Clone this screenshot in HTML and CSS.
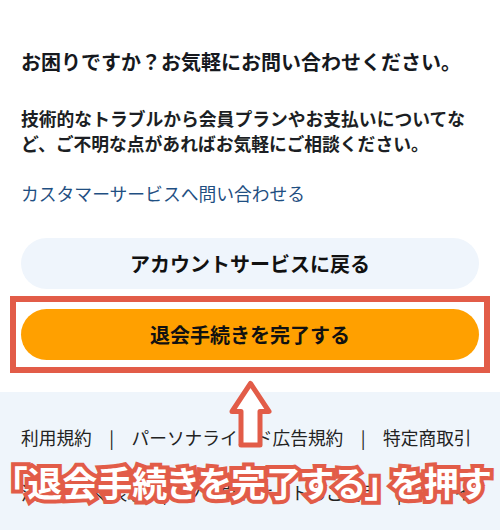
FILE: index.html
```html
<!DOCTYPE html>
<html lang="ja">
<head>
<meta charset="utf-8">
<link rel="stylesheet" href="styles.css">
</head>
<body>
<main class="content">
  <h1 class="title">お困りですか？お気軽にお問い合わせください。</h1>
  <p class="desc">技術的なトラブルから会員プランやお支払いについてなど、ご不明な点があればお気軽にご相談ください。</p>
  <a class="link" href="#">カスタマーサービスへ問い合わせる</a>
  <div class="actions">
    <button class="btn btn-back">アカウントサービスに戻る</button>
    <div class="highlight">
      <button class="btn btn-primary">退会手続きを完了する</button>
      <span class="highlight-box"></span>
    </div>
  </div>
</main>
<footer class="footer">
  <a href="#">利用規約</a><span class="sep">|</span><a href="#">パーソナライズド広告規約</a><span class="sep">|</span><a href="#">特定商取引法に基づく表示</a><span class="sep">|</span><a href="#">クラウドサイトのご利用</a><span class="sep">|</span><a href="#">プライ</a>
</footer>
<div class="annotation">
  <svg class="arrow" width="50" height="74" viewBox="0 0 50 74">
    <path d="M24.5 5.5 L43 33.5 L34 33.5 L34 67 L15 67 L15 33.5 L6 33.5 Z" fill="#fff" stroke="#e25c48" stroke-width="5" stroke-linejoin="round"/>
  </svg>
  <p class="note">「退会手続きを完了する」 を押す</p>
</div>
</body>
</html>
```
FILE: styles.css
```css
* { box-sizing: border-box; }
html, body { margin: 0; padding: 0; }
body {
  width: 500px;
  height: 530px;
  overflow: hidden;
  position: relative;
  background: #fff;
  font-family: "Noto Sans CJK JP", "Noto Sans", sans-serif;
  color: #16191e;
}
.content {
  padding: 48px 21px 32px;
}
.title {
  margin: 0;
  font-size: 20px;
  line-height: 28px;
  font-weight: 700;
}
.desc {
  margin: 29.5px 0 0;
  font-size: 17.8px;
  line-height: 25px;
  font-weight: 700;
  color: #1c1f24;
}
.link {
  display: block;
  margin-top: 25px;
  font-size: 17.8px;
  line-height: 25px;
  color: #1f4f82;
  text-decoration: none;
}
.actions {
  margin-top: 32.5px;
  display: flex;
  flex-direction: column;
  gap: 20px;
}
.btn {
  display: block;
  width: 100%;
  height: 51px;
  border: 0;
  border-radius: 26px;
  font-family: inherit;
  font-size: 20px;
  font-weight: 700;
  color: #111;
  padding: 0;
}
.btn-back { background: #eff5fc; }
.btn-primary { background: #ffa000; }
.highlight { position: relative; }
.highlight-box {
  position: absolute;
  left: -11px;
  right: -11px;
  top: -13px;
  bottom: -13px;
  border: 6px solid #e25c48;
}
.footer {
  background: #eff5fb;
  height: 138px;
  overflow: hidden;
  padding: 18px 21px 0;
  font-size: 17.7px;
  line-height: 55px;
  color: #222;
}
.footer a { color: #222; text-decoration: none; }
.sep { margin: 0 17.5px; }
.annotation {
  position: absolute;
  left: 0;
  top: 378px;
  width: 500px;
}
.arrow {
  display: block;
  position: absolute;
  left: 226px;
  top: 0;
}
.note {
  position: absolute;
  left: 0;
  top: 79px;
  width: 500px;
  margin: 0;
  text-align: center;
  font-size: 35px;
  line-height: 50px;
  font-weight: 700;
  color: #fff;
  font-feature-settings: "palt";
  -webkit-text-stroke: 8px #e25c48;
  paint-order: stroke fill;
  white-space: nowrap;
}
```
